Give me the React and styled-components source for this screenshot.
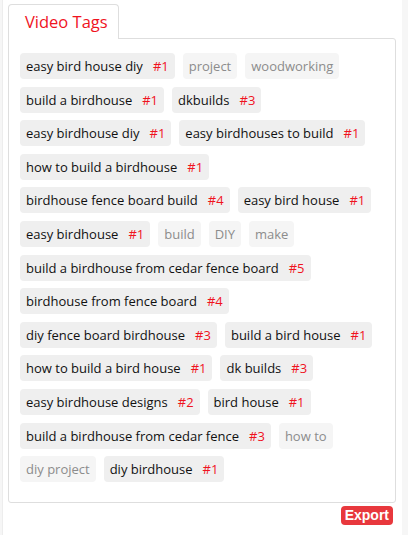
import React from "react";
import styled, { createGlobalStyle } from "styled-components";

const GlobalStyle = createGlobalStyle`
  body {
    margin: 0;
    background: #f6f6f6;
    font-family: "Open Sans", "Noto Sans", sans-serif;
  }
`;

const Page = styled.div`
  width: 400px;
  min-height: 535px;
  margin-left: 2px;
  box-sizing: border-box;
  background: #fff;
  border-left: 1px solid #ededed;
  padding: 4px 6px 0 5px;
`;

const TabBar = styled.div`
  display: flex;
`;

const Tab = styled.div`
  box-sizing: border-box;
  width: 111px;
  height: 35px;
  padding: 5px 0 0 16px;
  border: 1px solid #dedede;
  border-bottom: none;
  border-radius: 4px 4px 0 0;
  background: #fff;
  color: #f0131e;
  font-size: 16.5px;
  margin-bottom: -1px;
  position: relative;
`;

const Panel = styled.div`
  border: 1px solid #dedede;
  border-radius: 0 3px 3px 3px;
  padding: 14px 10px 20px 11px;
`;

const TagList = styled.div`
  display: flex;
  flex-wrap: wrap;
  gap: 7.6px 8px;
`;

const Tag = styled.div`
  display: flex;
  align-items: center;
  height: 26px;
  padding: 0 6px;
  border-radius: 4px;
  font-size: 13px;
  background: ${p => (p.$ranked ? "#efefef" : "#f5f5f5")};
  color: ${p => (p.$ranked ? "#111" : "#8c8c8c")};
  white-space: nowrap;
`;

const Rank = styled.span`
  color: #f0131e;
  margin-left: 10px;
`;

const Footer = styled.div`
  display: flex;
  justify-content: flex-end;
  padding: 3px 3px 0 0;
`;

const ExportButton = styled.button`
  height: 19px;
  padding: 0 4px;
  border: none;
  border-radius: 4px;
  background: #e8383d;
  color: #fff;
  font-family: "Liberation Sans", Arial, sans-serif;
  font-weight: bold;
  font-size: 14px;
  line-height: 19px;
`;

const tags = [
  ["easy bird house diy", 1],
  ["project"],
  ["woodworking"],
  ["build a birdhouse", 1],
  ["dkbuilds", 3],
  ["easy birdhouse diy", 1],
  ["easy birdhouses to build", 1],
  ["how to build a birdhouse", 1],
  ["birdhouse fence board build", 4],
  ["easy bird house", 1],
  ["easy birdhouse", 1],
  ["build"],
  ["DIY"],
  ["make"],
  ["build a birdhouse from cedar fence board", 5],
  ["birdhouse from fence board", 4],
  ["diy fence board birdhouse", 3],
  ["build a bird house", 1],
  ["how to build a bird house", 1],
  ["dk builds", 3],
  ["easy birdhouse designs", 2],
  ["bird house", 1],
  ["build a birdhouse from cedar fence", 3],
  ["how to"],
  ["diy project"],
  ["diy birdhouse", 1]
];

export default function App() {
  return (
    <>
      <GlobalStyle />
      <Page>
        <TabBar>
          <Tab>Video Tags</Tab>
        </TabBar>
        <Panel>
          <TagList>
            {tags.map(([label, rank], i) => (
              <Tag key={i} $ranked={!!rank}>
                {label}
                {rank && <Rank>#{rank}</Rank>}
              </Tag>
            ))}
          </TagList>
        </Panel>
        <Footer>
          <ExportButton>Export</ExportButton>
        </Footer>
      </Page>
    </>
  );
}
